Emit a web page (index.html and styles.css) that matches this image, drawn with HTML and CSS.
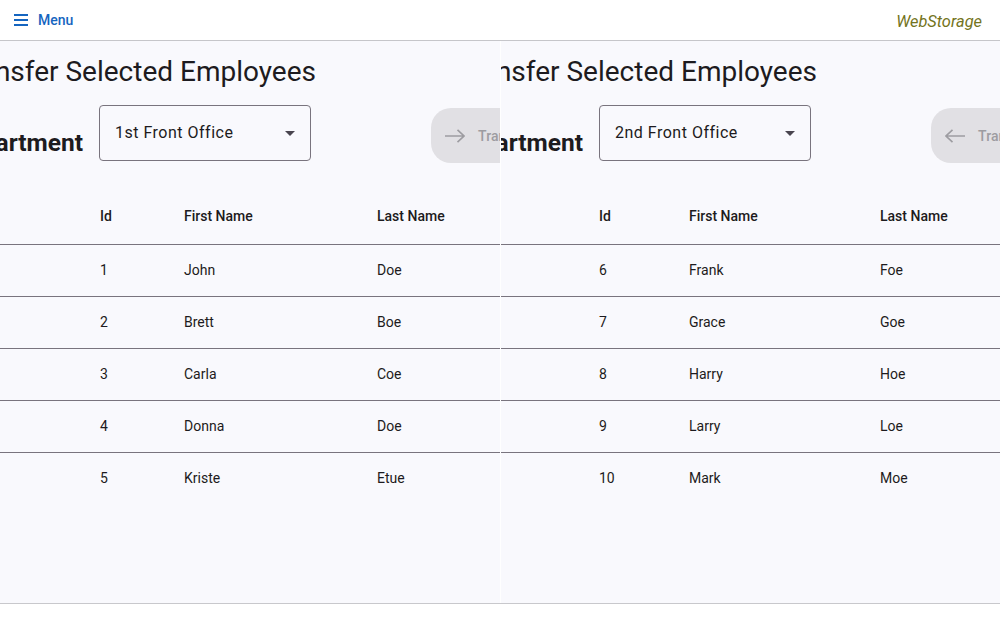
FILE: index.html
```html
<!DOCTYPE html>
<html lang="en">
<head>
<meta charset="utf-8">
<title>WebStorage</title>
<link rel="stylesheet" href="styles.css">
</head>
<body>
<header class="topbar">
  <button class="menu-btn" type="button">
    <svg class="menu-icon" width="14" height="12" viewBox="0 0 14 12"><rect x="0" y="0" width="14" height="2"/><rect x="0" y="5" width="14" height="2"/><rect x="0" y="10" width="14" height="2"/></svg>
    <span>Menu</span>
  </button>
  <span class="brand">WebStorage</span>
</header>
<main class="main">
  <section class="panel panel-left">
    <div class="title-wrap"><h1 class="title">Transfer Selected Employees</h1></div>
    <div class="controls">
      <div class="label-wrap"><span class="dept">Department</span></div>
      <div class="select"><span>1st Front Office</span><span class="caret"></span></div>
      <button class="transfer" type="button" disabled>
        <svg width="20" height="14" viewBox="0 0 20 14"><path d="M0 7H19M12.5 0.8L19 7L12.5 13.2" fill="none" stroke="currentColor" stroke-width="1.6"/></svg>
        <span>Transfer</span>
      </button>
    </div>
    <table class="grid">
      <colgroup><col class="c0"><col class="c1"><col class="c2"><col class="c3"></colgroup>
      <thead><tr><th></th><th>Id</th><th>First Name</th><th>Last Name</th></tr></thead>
      <tbody>
        <tr><td></td><td>1</td><td>John</td><td>Doe</td></tr>
        <tr><td></td><td>2</td><td>Brett</td><td>Boe</td></tr>
        <tr><td></td><td>3</td><td>Carla</td><td>Coe</td></tr>
        <tr><td></td><td>4</td><td>Donna</td><td>Doe</td></tr>
        <tr><td></td><td>5</td><td>Kriste</td><td>Etue</td></tr>
      </tbody>
    </table>
  </section>
  <section class="panel panel-right">
    <div class="title-wrap"><h1 class="title">Transfer Selected Employees</h1></div>
    <div class="controls">
      <div class="label-wrap"><span class="dept">Department</span></div>
      <div class="select"><span>2nd Front Office</span><span class="caret"></span></div>
      <button class="transfer" type="button" disabled>
        <svg width="20" height="14" viewBox="0 0 20 14"><path d="M20 7H1M7.5 0.8L1 7L7.5 13.2" fill="none" stroke="currentColor" stroke-width="1.6"/></svg>
        <span>Transfer</span>
      </button>
    </div>
    <table class="grid">
      <colgroup><col class="c0"><col class="c1"><col class="c2"><col class="c3"></colgroup>
      <thead><tr><th></th><th>Id</th><th>First Name</th><th>Last Name</th></tr></thead>
      <tbody>
        <tr><td></td><td>6</td><td>Frank</td><td>Foe</td></tr>
        <tr><td></td><td>7</td><td>Grace</td><td>Goe</td></tr>
        <tr><td></td><td>8</td><td>Harry</td><td>Hoe</td></tr>
        <tr><td></td><td>9</td><td>Larry</td><td>Loe</td></tr>
        <tr><td></td><td>10</td><td>Mark</td><td>Moe</td></tr>
      </tbody>
    </table>
  </section>
</main>
</body>
</html>
```
FILE: styles.css
```css
* { box-sizing: border-box; }
html, body { margin: 0; padding: 0; background: #ffffff; }
body {
  font-family: Roboto, "Liberation Sans", sans-serif;
  color: #1d1b20;
  width: 1000px;
  height: 634px;
  overflow: hidden;
}
.topbar {
  height: 41px;
  border-bottom: 1px solid #c6c6ca;
  display: flex;
  align-items: center;
  justify-content: space-between;
  padding: 0 18px 0 14px;
  background: #fff;
}
.menu-btn {
  display: flex;
  align-items: center;
  gap: 10px;
  border: 0;
  background: none;
  padding: 0;
  color: #1565c0;
  font-family: inherit;
  font-size: 14px;
  font-weight: 500;
  margin-top: -1px;
}
.menu-icon { fill: #1565c0; display: block; }
.brand {
  font-style: italic;
  font-size: 16.4px;
  color: #737320;
  margin-top: 2px;
}
.main {
  display: flex;
  gap: 1px;
  height: 563px;
  border-bottom: 1px solid #c8c8cc;
  background: #ffffff;
}
.panel {
  background: #f9f9fd;
  overflow: hidden;
  position: relative;
}
.panel-left { width: 500px; }
.panel-right { width: 499px; }
.title-wrap {
  width: 416px;
  margin-left: -100px;
  text-align: right;
  padding-top: 13px;
  height: 64px;
}
.title {
  margin: 0;
  font-size: 28px;
  font-weight: 400;
  line-height: 36px;
  white-space: nowrap;
}
.controls {
  display: flex;
  align-items: flex-start;
  width: 700px;
  margin-left: -100px;
}
.panel-right .controls { margin-left: -101px; }
.label-wrap {
  width: 183px;
  text-align: right;
  padding-top: 21px;
  white-space: nowrap;
}
.dept {
  font-size: 24.5px;
  font-weight: 700;
  line-height: 34px;
}
.select {
  margin-left: 16px;
  width: 212px;
  height: 56px;
  border: 1px solid #79747e;
  border-radius: 4px;
  display: flex;
  align-items: center;
  justify-content: space-between;
  padding: 0 15px 0 15px;
  font-size: 16px;
  letter-spacing: 0.5px;
}
.select span:first-child { margin-top: -2px; }
.caret {
  width: 0;
  height: 0;
  border-left: 5px solid transparent;
  border-right: 5px solid transparent;
  border-top: 5px solid #49454f;
  margin-top: 1px;
}
.transfer {
  margin-left: 120px;
  margin-top: 3px;
  height: 55px;
  border: 0;
  border-radius: 20px;
  background: #e1e0e4;
  color: #9d9ca1;
  display: flex;
  align-items: center;
  gap: 13px;
  padding: 0 24px 0 14px;
  font-family: inherit;
  font-size: 14px;
  font-weight: 500;
  letter-spacing: 0.1px;
}
.transfer svg { display: block; }
.grid {
  margin-top: 25px;
  border-collapse: collapse;
  table-layout: fixed;
  width: 700px;
  font-size: 14px;
}
.grid th, .grid td {
  text-align: left;
  padding: 0 0 0 16px;
  white-space: nowrap;
}
.grid th {
  font-weight: 500;
  height: 56px;
  border-bottom: 1px solid #79747e;
}
.grid td {
  height: 52px;
  font-weight: 400;
  border-bottom: 1px solid #79747e;
}
.grid tbody tr:last-child td { border-bottom: 0; }
.panel-left .c0 { width: 84px; }
.panel-left .c1 { width: 84px; }
.panel-left .c2 { width: 193px; }
.panel-left .c3 { width: 339px; }
.panel-right .c0 { width: 82px; }
.panel-right .c1 { width: 90px; }
.panel-right .c2 { width: 191px; }
.panel-right .c3 { width: 337px; }
```
